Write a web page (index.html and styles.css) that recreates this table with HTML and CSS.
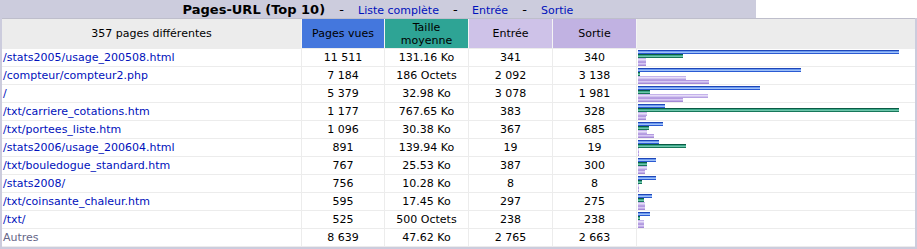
FILE: index.html
```html
<!DOCTYPE html>
<html lang="fr">
<head>
<meta charset="utf-8">
<title>Pages-URL (Top 10)</title>
<link rel="stylesheet" href="styles.css">
</head>
<body>
<div class="panel">
  <div class="titlebar">
    <div class="title">Pages-URL (Top 10)<span class="sep">-</span><a href="#">Liste complète</a><span class="sep">-</span><a href="#">Entrée</a><span class="sep">-</span><a href="#">Sortie</a></div>
    <div class="blank"></div>
  </div>
  <div class="frame">
    <div class="data">
      <div class="row head">
        <div class="cell">357 pages différentes</div>
        <div class="cell c-p">Pages vues</div>
        <div class="cell c-k">Taille<br>moyenne</div>
        <div class="cell c-e">Entrée</div>
        <div class="cell c-x">Sortie</div>
        <div class="cell graph"></div>
      </div>

      <div class="row">
        <div class="cell url"><a href="#">/stats2005/usage_200508.html</a></div>
        <div class="cell">11 511</div><div class="cell">131.16 Ko</div><div class="cell">341</div><div class="cell">340</div>
        <div class="cell graph"><div class="bar p" style="width:261px"></div><div class="bar k" style="width:45px"></div><div class="bar e" style="width:8px"></div><div class="bar x" style="width:8px"></div></div>
      </div>
      <div class="row">
        <div class="cell url"><a href="#">/compteur/compteur2.php</a></div>
        <div class="cell">7 184</div><div class="cell">186 Octets</div><div class="cell">2 092</div><div class="cell">3 138</div>
        <div class="cell graph"><div class="bar p" style="width:163px"></div><div class="bar k" style="width:2px"></div><div class="bar e" style="width:48px"></div><div class="bar x" style="width:71px"></div></div>
      </div>
      <div class="row">
        <div class="cell url"><a href="#">/</a></div>
        <div class="cell">5 379</div><div class="cell">32.98 Ko</div><div class="cell">3 078</div><div class="cell">1 981</div>
        <div class="cell graph"><div class="bar p" style="width:122px"></div><div class="bar k" style="width:12px"></div><div class="bar e" style="width:70px"></div><div class="bar x" style="width:45px"></div></div>
      </div>
      <div class="row">
        <div class="cell url"><a href="#">/txt/carriere_cotations.htm</a></div>
        <div class="cell">1 177</div><div class="cell">767.65 Ko</div><div class="cell">383</div><div class="cell">328</div>
        <div class="cell graph"><div class="bar p" style="width:27px"></div><div class="bar k" style="width:261px"></div><div class="bar e" style="width:9px"></div><div class="bar x" style="width:8px"></div></div>
      </div>
      <div class="row">
        <div class="cell url"><a href="#">/txt/portees_liste.htm</a></div>
        <div class="cell">1 096</div><div class="cell">30.38 Ko</div><div class="cell">367</div><div class="cell">685</div>
        <div class="cell graph"><div class="bar p" style="width:25px"></div><div class="bar k" style="width:11px"></div><div class="bar e" style="width:9px"></div><div class="bar x" style="width:16px"></div></div>
      </div>
      <div class="row">
        <div class="cell url"><a href="#">/stats2006/usage_200604.html</a></div>
        <div class="cell">891</div><div class="cell">139.94 Ko</div><div class="cell">19</div><div class="cell">19</div>
        <div class="cell graph"><div class="bar p" style="width:21px"></div><div class="bar k" style="width:48px"></div><div class="bar e" style="width:1px"></div><div class="bar x" style="width:1px"></div></div>
      </div>
      <div class="row">
        <div class="cell url"><a href="#">/txt/bouledogue_standard.htm</a></div>
        <div class="cell">767</div><div class="cell">25.53 Ko</div><div class="cell">387</div><div class="cell">300</div>
        <div class="cell graph"><div class="bar p" style="width:18px"></div><div class="bar k" style="width:9px"></div><div class="bar e" style="width:9px"></div><div class="bar x" style="width:7px"></div></div>
      </div>
      <div class="row">
        <div class="cell url"><a href="#">/stats2008/</a></div>
        <div class="cell">756</div><div class="cell">10.28 Ko</div><div class="cell">8</div><div class="cell">8</div>
        <div class="cell graph"><div class="bar p" style="width:18px"></div><div class="bar k" style="width:4px"></div><div class="bar e" style="width:1px"></div><div class="bar x" style="width:1px"></div></div>
      </div>
      <div class="row">
        <div class="cell url"><a href="#">/txt/coinsante_chaleur.htm</a></div>
        <div class="cell">595</div><div class="cell">17.45 Ko</div><div class="cell">297</div><div class="cell">275</div>
        <div class="cell graph"><div class="bar p" style="width:14px"></div><div class="bar k" style="width:6px"></div><div class="bar e" style="width:7px"></div><div class="bar x" style="width:7px"></div></div>
      </div>
      <div class="row">
        <div class="cell url"><a href="#">/txt/</a></div>
        <div class="cell">525</div><div class="cell">500 Octets</div><div class="cell">238</div><div class="cell">238</div>
        <div class="cell graph"><div class="bar p" style="width:12px"></div><div class="bar k" style="width:2px"></div><div class="bar e" style="width:6px"></div><div class="bar x" style="width:6px"></div></div>
      </div>
      <div class="row">
        <div class="cell url"><span class="other">Autres</span></div>
        <div class="cell">8 639</div><div class="cell">47.62 Ko</div><div class="cell">2 765</div><div class="cell">2 663</div>
        <div class="cell graph"></div>
      </div>
    </div>
  </div>
</div>
</body>
</html>
```

FILE: styles.css
```css
html, body {
  margin: 0;
  padding: 0;
  background: #FFFFFF;
}

body {
  font-family: "DejaVu Sans", Verdana, sans-serif;
  font-size: 11px;
  color: #000000;
}

a {
  color: #0011BB;
  text-decoration: none;
}

.panel {
  width: 917px;
}

.titlebar {
  display: flex;
  height: 18px;
}

.title {
  width: 756px;
  background: #CCCCDD;
  text-align: center;
  font-weight: bold;
  font-size: 13px;
  line-height: 18px;
  padding-top: 1px;
  height: 17px;
  white-space: nowrap;
}

.title a {
  font-weight: normal;
  font-size: 11px;
}

.sep {
  display: inline-block;
  width: 33px;
  text-align: center;
  font-weight: normal;
}

.blank {
  flex: 1;
  background: #FFFFFF;
}

.frame {
  background: #CCCCDD;
  padding: 0 2px 2px 2px;
}

.data {
  background: #FFFFFF;
  border-top: 1px solid #BEBECB;
}

.row {
  display: grid;
  grid-template-columns: 300px 83px 84px 84px 84px 1fr;
  height: 18px;
  box-sizing: border-box;
  border-bottom: 1px solid #ECECEC;
}

.row.head {
  height: 30px;
  background: #ECECEC;
  border-bottom: 1px solid #ECECEC;
}

.cell {
  box-sizing: border-box;
  border-right: 1px solid #ECECEC;
  display: flex;
  align-items: center;
  justify-content: center;
  text-align: center;
  line-height: 13px;
  white-space: nowrap;
  overflow: hidden;
}

.head .cell {
  border-right-color: #F4F4F4;
}

.cell.url {
  justify-content: flex-start;
  text-align: left;
  padding-left: 1px;
}

.other {
  color: #666688;
}

.c-p { background: #4477DD; }
.c-k { background: #2EA495; }
.c-e { background: #CEC2E8; }
.c-x { background: #C1B2E2; }

.cell.graph {
  border-right: none;
  display: flex;
  flex-direction: column;
  align-items: flex-start;
  justify-content: flex-start;
  padding: 1px 0 0 1px;
}

.bar {
  height: 4px;
  flex: none;
}

.bar.p {
  background: linear-gradient(to bottom, #1E46B8 0 1px, #6E9CF0 1px 2px, #9FC0F8 2px 3px, #2A5AD2 3px 4px);
}

.bar.k {
  background: linear-gradient(to bottom, #0B5A44 0 1px, #3DAA8A 1px 2px, #6FC6AC 2px 3px, #17775A 3px 4px);
}

.bar.e {
  background: linear-gradient(to bottom, #C4B2EA 0 1px, #E6DDF8 1px 2px, #D2C4F0 2px 3px, #B7A2E2 3px 4px);
}

.bar.x {
  background: linear-gradient(to bottom, #B39AE0 0 1px, #D7C9F3 1px 2px, #C2AEE9 2px 3px, #A48AD6 3px 4px);
}
```
